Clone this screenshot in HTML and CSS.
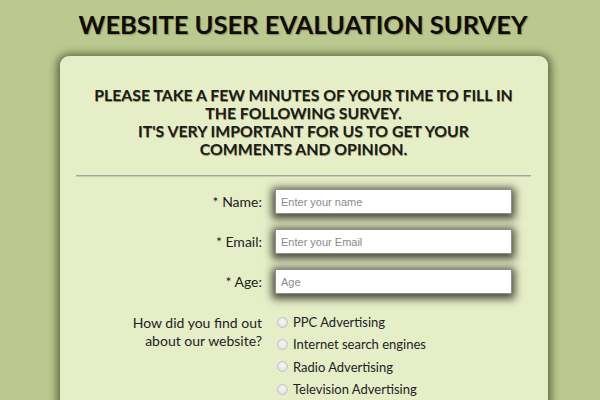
FILE: index.html
```html
<!DOCTYPE html>
<html>
<head>
<meta charset="utf-8">
<link rel="stylesheet" href="styles.css">
</head>
<body>
<h1 class="title">WEBSITE USER EVALUATION SURVEY</h1>
<div class="card">
  <h2 class="intro">PLEASE TAKE A FEW MINUTES OF YOUR TIME TO FILL IN THE FOLLOWING SURVEY.<br>IT'S VERY IMPORTANT FOR US TO GET YOUR COMMENTS AND OPINION.</h2>
  <hr class="rule">
  <form class="form">
    <div class="row">
      <label class="lbl">* Name:</label>
      <input class="field" type="text" placeholder="Enter your name">
    </div>
    <div class="row">
      <label class="lbl">* Email:</label>
      <input class="field" type="text" placeholder="Enter your Email">
    </div>
    <div class="row">
      <label class="lbl">* Age:</label>
      <input class="field" type="text" placeholder="Age">
    </div>
    <div class="row row-top">
      <div class="lbl lbl-q">How did you find out about our website?</div>
      <div class="options">
        <label class="opt"><span class="radio"></span>PPC Advertising</label>
        <label class="opt"><span class="radio"></span>Internet search engines</label>
        <label class="opt"><span class="radio"></span>Radio Advertising</label>
        <label class="opt"><span class="radio"></span>Television Advertising</label>
      </div>
    </div>
  </form>
</div>
</body>
</html>
```

FILE: styles.css
```css
html, body {
  margin: 0;
  padding: 0;
}
body {
  background: #bbc88f;
  font-family: Lato, "Open Sans", sans-serif;
  color: #1a1a1a;
  overflow: hidden;
}
.title {
  margin: 0;
  padding: 9px 0 0 6px;
  height: 46px;
  box-sizing: border-box;
  text-align: center;
  font-size: 25.5px;
  font-weight: 700;
  line-height: 31px;
  color: #0d0d0d;
  text-shadow: 1px 1px 1px #8f8a50;
}
.card {
  width: 488px;
  margin-left: 60px;
  margin-top: 10px;
  background: #e6eec8;
  border-radius: 9px;
  box-shadow: 0 1px 8px 3px #5e6538;
  padding: 30px 17px 40px 16px;
  box-sizing: border-box;
  min-height: 400px;
}
.intro {
  margin: 0 auto;
  max-width: 424px;
  text-align: center;
  font-size: 15.8px;
  font-weight: 700;
  line-height: 18px;
  color: #1c1c1c;
  text-shadow: 0.5px 0.5px 0.5px #9a9560;
}
.rule {
  margin: 17px 0 0 0;
  border: 0;
  height: 1px;
  background: #a7a7a0;
  box-shadow: 0 1px 0 #c9cdb6;
}
.form {
  margin-top: 13px;
}
.row {
  display: flex;
  align-items: center;
  margin-bottom: 15px;
}
.row-top {
  align-items: flex-start;
  margin-top: 21px;
}
.lbl {
  width: 186px;
  text-align: right;
  font-size: 14px;
  color: #222;
  margin-right: 13px;
}
.lbl-q {
  line-height: 18px;
  margin-top: -1px;
  padding-left: 40px;
  box-sizing: border-box;
}
.field {
  width: 237px;
  height: 25px;
  box-sizing: border-box;
  border: 1px solid #8e8e8e;
  background: #fff;
  padding: 0 5px;
  font-family: "Liberation Sans", Arial, sans-serif;
  font-size: 11px;
  color: #333;
  box-shadow: 0 2px 8px 3px #4d4d3c;
  outline: none;
}
.field::placeholder {
  color: #8a8a8a;
}
.options {
  display: flex;
  flex-direction: column;
  gap: 4.4px;
  margin-top: -2px;
}
.opt {
  display: flex;
  align-items: center;
  font-size: 13px;
  line-height: 18px;
  color: #222;
}
.radio {
  width: 9px;
  height: 9px;
  border-radius: 50%;
  border: 1px solid #c4c4c4;
  background: radial-gradient(circle at 50% 40%, #f8f8f8, #dadada);
  margin: 0 5px 0 2px;
  flex: none;
}
```
